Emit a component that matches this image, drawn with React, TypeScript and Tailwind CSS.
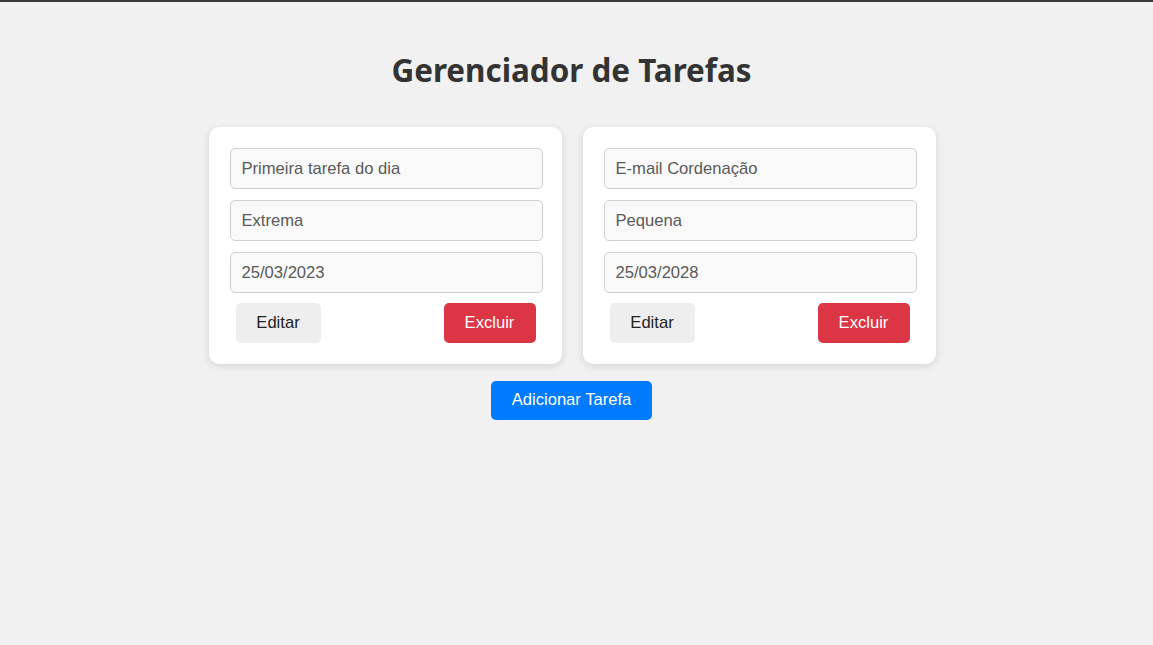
import React from "react";

interface Tarefa {
  id: number;
  titulo: string;
  prioridade: string;
  data: string;
}

const tarefas: Tarefa[] = [
  { id: 1, titulo: "Primeira tarefa do dia", prioridade: "Extrema", data: "25/03/2023" },
  { id: 2, titulo: "E-mail Cordenação", prioridade: "Pequena", data: "25/03/2028" },
];

function Campo({ value }: { value: string }) {
  return (
    <input
      readOnly
      value={value}
      className="h-[41px] w-full rounded-[5px] border border-[#d0d0d0] bg-[#f9f9f9] px-[11px] text-[16.6px] text-[#5a5a5a] outline-none"
      style={{ fontFamily: '"Liberation Sans", Arial, sans-serif' }}
    />
  );
}

function CardTarefa({ tarefa }: { tarefa: Tarefa }) {
  return (
    <div className="flex w-[353px] flex-col gap-[11px] rounded-[10px] bg-white py-[21px] pl-[21px] pr-[19px] shadow-[0_2px_8px_rgba(0,0,0,0.12)]">
      <Campo value={tarefa.titulo} />
      <Campo value={tarefa.prioridade} />
      <Campo value={tarefa.data} />
      <div className="-mt-px flex items-center justify-between pl-[6px] pr-[7px]">
        <button className="h-[40px] w-[85px] rounded-[5px] bg-[#eeeeee] text-[16.6px] text-[#222]">
          Editar
        </button>
        <button className="h-[40px] w-[92px] rounded-[5px] bg-[#dc3545] text-[16.6px] text-white">
          Excluir
        </button>
      </div>
    </div>
  );
}

export default function App() {
  return (
    <div
      className="min-h-[645px] border-t-2 border-[#3a3a3a] bg-[#f1f1f1] pr-[10px]"
      style={{ fontFamily: '"Liberation Sans", Arial, sans-serif' }}
    >
      <div className="flex flex-col items-center">
        <h1
          className="mt-[48px] text-[31.4px] font-bold leading-[40px] text-[#333]"
          style={{ fontFamily: '"Noto Sans", sans-serif' }}
        >
          Gerenciador de Tarefas
        </h1>

        {/* Lista de tarefas */}
        <div className="ml-[1px] mt-[37px] flex gap-[21px]">
          {tarefas.map((t) => (
            <CardTarefa key={t.id} tarefa={t} />
          ))}
        </div>

        <button className="mt-[17px] h-[39px] w-[161px] rounded-[5px] bg-[#007bff] text-[16.6px] text-white">
          Adicionar Tarefa
        </button>
      </div>
    </div>
  );
}
